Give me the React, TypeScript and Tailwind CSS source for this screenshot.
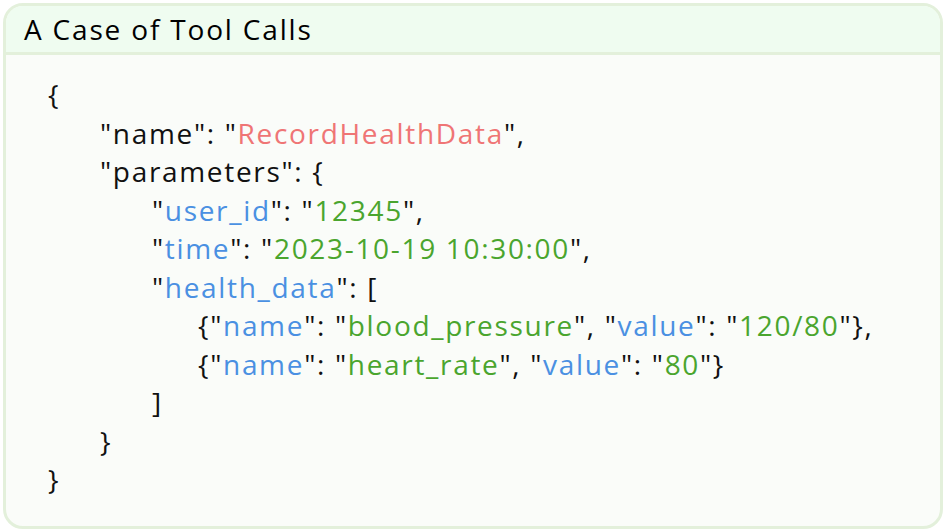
import React from "react";

const K = ({ children }: { children: React.ReactNode }) => (
  <span className="text-[#4a90e2]">{children}</span>
);
const S = ({ children }: { children: React.ReactNode }) => (
  <span className="text-[#4aa52e]">{children}</span>
);
const R = ({ children }: { children: React.ReactNode }) => (
  <span className="text-[#ef7575]">{children}</span>
);

const Line = ({ indent, children }: { indent: number; children: React.ReactNode }) => {
  const pl = ["pl-0", "pl-[52px]", "pl-[104px]", "pl-[150px]"][indent];
  return <div className={`${pl} h-[38.5px] flex items-center whitespace-pre`}>{children}</div>;
};

export default function App() {
  return (
    <div className="w-[946px] h-[532px] bg-white p-[3px]" style={{ fontFamily: "'Open Sans', 'Noto Sans', sans-serif" }}>
      <div className="w-[940px] h-[526px] border-[3px] border-[#e3f0db] rounded-[20px] overflow-hidden bg-[#fafcf9] flex flex-col">
        <div className="h-[49px] bg-[#effcf0] border-b-[3px] border-[#e3f0db] flex items-center pl-[18px] text-[28px] tracking-[0.065em] text-black">
          A Case of Tool Calls
        </div>
        <div className="pl-[42px] pt-[20px] text-[28px] tracking-[0.06em] text-[#111]">
          <Line indent={0}>{"{"}</Line>
          <Line indent={1}>"name": "<R>RecordHealthData</R>",</Line>
          <Line indent={1}>"parameters": {"{"}</Line>
          <Line indent={2}>"<K>user_id</K>": "<S>12345</S>",</Line>
          <Line indent={2}>"<K>time</K>": "<S>2023-10-19 10:30:00</S>",</Line>
          <Line indent={2}>"<K>health_data</K>": [</Line>
          <Line indent={3}>{"{"}"<K>name</K>": "<S>blood_pressure</S>", "<K>value</K>": "<S>120/80</S>"{"}"},</Line>
          <Line indent={3}>{"{"}"<K>name</K>": "<S>heart_rate</S>", "<K>value</K>": "<S>80</S>"{"}"}</Line>
          <Line indent={2}>]</Line>
          <Line indent={1}>{"}"}</Line>
          <Line indent={0}>{"}"}</Line>
        </div>
      </div>
    </div>
  );
}
